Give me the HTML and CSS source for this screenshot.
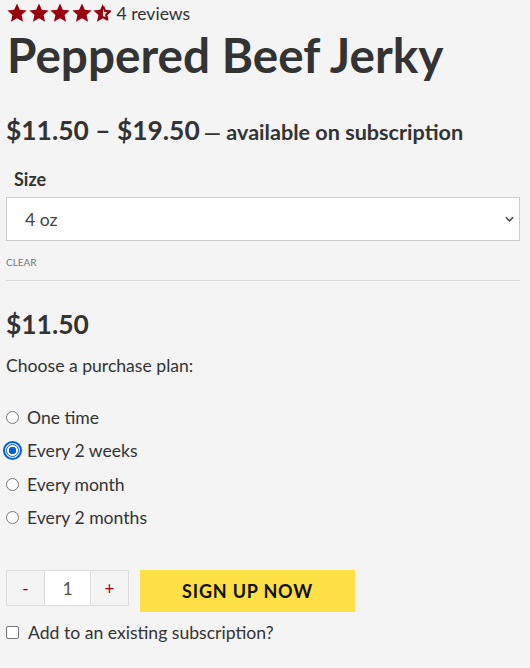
FILE: index.html
```html
<!DOCTYPE html>
<html>
<head>
<meta charset="utf-8">
<link rel="stylesheet" href="styles.css">
</head>
<body>
<div class="product">
  <div class="rating">
    <span class="stars">
      <svg viewBox="0 0 24 24" class="star"><path d="M12 1.5l3.1 6.9 7.4.8-5.5 5 1.6 7.4L12 17.8l-6.6 3.8 1.6-7.4-5.5-5 7.4-.8z"/></svg>
      <svg viewBox="0 0 24 24" class="star"><path d="M12 1.5l3.1 6.9 7.4.8-5.5 5 1.6 7.4L12 17.8l-6.6 3.8 1.6-7.4-5.5-5 7.4-.8z"/></svg>
      <svg viewBox="0 0 24 24" class="star"><path d="M12 1.5l3.1 6.9 7.4.8-5.5 5 1.6 7.4L12 17.8l-6.6 3.8 1.6-7.4-5.5-5 7.4-.8z"/></svg>
      <svg viewBox="0 0 24 24" class="star"><path d="M12 1.5l3.1 6.9 7.4.8-5.5 5 1.6 7.4L12 17.8l-6.6 3.8 1.6-7.4-5.5-5 7.4-.8z"/></svg>
      <svg viewBox="0 0 24 24" class="star"><path d="M12 1.5L8.9 8.4l-7.4.8 5.5 5-1.6 7.4L12 17.8z"/><path d="M12 4.7l2.2 4.9 5.3.6-4 3.6 1.2 5.3L12 16.3" fill="none" stroke-width="2.4" stroke-linejoin="round" class="outline"/></svg>
    </span>
    <span class="reviews">4 reviews</span>
  </div>
  <h1 class="title">Peppered Beef Jerky</h1>
  <p class="price-range"><span class="amount">$11.50 – $19.50</span> <span class="sub">— available on subscription</span></p>

  <div class="variation">
    <label class="var-label">Size</label>
    <div class="select">
      <span>4 oz</span>
      <svg viewBox="0 0 10 6" class="chev"><path d="M1 1l4 4 4-4" fill="none" stroke="#444" stroke-width="1.8"/></svg>
    </div>
    <a class="clear">CLEAR</a>
  </div>

  <div class="single-price">$11.50</div>
  <p class="choose">Choose a purchase plan:</p>

  <ul class="plans">
    <li><span class="radio"></span>One time</li>
    <li><span class="radio checked"></span>Every 2 weeks</li>
    <li><span class="radio"></span>Every month</li>
    <li><span class="radio"></span>Every 2 months</li>
  </ul>

  <div class="cart">
    <div class="qty">
      <span class="qbtn">-</span>
      <span class="qval">1</span>
      <span class="qbtn">+</span>
    </div>
    <button class="signup">SIGN UP NOW</button>
  </div>
  <div class="existing"><span class="checkbox"></span>Add to an existing subscription?</div>
</div>
</body>
</html>
```
FILE: styles.css
```css
html, body {
  margin: 0;
  padding: 0;
  background: #f4f4f4;
}
body {
  font-family: Lato, "Open Sans", sans-serif;
  color: #333;
}
.product {
  padding: 0 10px 0 6px;
}
.rating {
  display: flex;
  align-items: center;
  height: 26px;
}
.stars {
  display: flex;
  margin-right: 3px;
}
.star {
  width: 22px;
  height: 22px;
  fill: #97000f;
  margin-right: -0.5px;
}
.star .outline {
  stroke: #97000f;
}
.reviews {
  font-size: 17.6px;
  color: #333;
}
.title {
  font-size: 47.7px;
  font-weight: 700;
  margin: 0;
  padding-left: 1px;
  line-height: 58px;
}
.price-range {
  margin: 29px 0 0;
  line-height: 34px;
}
.amount {
  font-size: 26.4px;
  font-weight: 700;
}
.sub {
  font-size: 21.6px;
  font-weight: 700;
}
.variation {
  margin-top: 16px;
  border-bottom: 1px solid #d9d9d9;
  padding-bottom: 12px;
}
.var-label {
  display: block;
  font-size: 18px;
  font-weight: 700;
  margin-left: 8px;
  line-height: 24px;
}
.select {
  margin-top: 6px;
  height: 42px;
  background: #fff;
  border: 1px solid #ccc;
  display: flex;
  align-items: center;
  justify-content: space-between;
  padding: 0 5px 0 18px;
  font-size: 17.6px;
  color: #444;
}
.chev {
  width: 9px;
  height: 6px;
}
.clear {
  display: block;
  margin-top: 15px;
  font-size: 10px;
  color: #777;
  line-height: 12px;
}
.single-price {
  margin-top: 28px;
  font-size: 26.4px;
  font-weight: 700;
  line-height: 30px;
}
.choose {
  margin: 16px 0 0;
  font-size: 17.6px;
  line-height: 22px;
}
.plans {
  list-style: none;
  margin: 24px 0 0;
  padding: 0;
}
.plans li {
  display: flex;
  align-items: center;
  font-size: 17.6px;
  height: 33.3px;
}
.radio {
  width: 11px;
  height: 11px;
  border: 1px solid #767676;
  border-radius: 50%;
  background: #fff;
  margin-right: 8px;
}
.radio.checked {
  border: 1px solid #0060df;
  background: radial-gradient(circle, #0060df 0 3.5px, #fff 4px);
  outline: 2px solid #0060df;
  outline-offset: 1px;
}
.cart {
  display: flex;
  margin-top: 36px;
  gap: 11px;
  align-items: flex-start;
}
.qty {
  display: flex;
  border: 1px solid #dcdcdc;
  height: 34px;
}
.qbtn {
  width: 37px;
  display: flex;
  align-items: center;
  justify-content: center;
  color: #97000f;
  font-size: 17px;
  background: #f4f4f4;
}
.qval {
  width: 45px;
  background: #fff;
  border-left: 1px solid #dcdcdc;
  border-right: 1px solid #dcdcdc;
  display: flex;
  align-items: center;
  justify-content: center;
  font-size: 17.6px;
  color: #555;
}
.signup {
  width: 215px;
  height: 42px;
  background: #fddf46;
  border: none;
  font-family: Lato, sans-serif;
  font-weight: 700;
  font-size: 18px;
  letter-spacing: 0.8px;
  color: #111;
  padding: 0;
}
.existing {
  display: flex;
  align-items: center;
  margin-top: 10px;
  font-size: 17.6px;
}
.checkbox {
  width: 11px;
  height: 11px;
  border: 1px solid #767676;
  border-radius: 2px;
  background: #fff;
  margin-right: 9px;
}
```
